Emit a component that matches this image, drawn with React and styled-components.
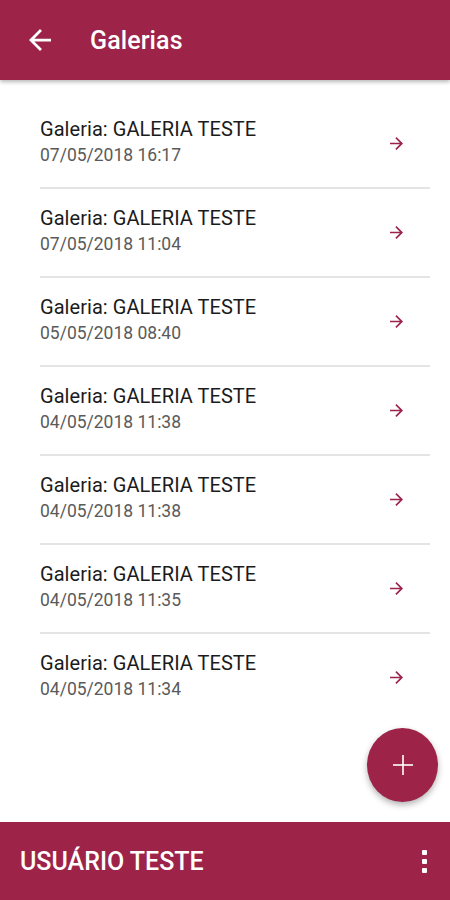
import React from 'react';
import styled, { createGlobalStyle } from 'styled-components';

const WINE = '#9d2349';

const GlobalStyle = createGlobalStyle`
  html, body {
    margin: 0;
    padding: 0;
    background: #fff;
  }
  body {
    font-family: Roboto, "Noto Sans", Arial, sans-serif;
  }
`;

const galleries = [
  { name: 'GALERIA TESTE', date: '07/05/2018 16:17' },
  { name: 'GALERIA TESTE', date: '07/05/2018 11:04' },
  { name: 'GALERIA TESTE', date: '05/05/2018 08:40' },
  { name: 'GALERIA TESTE', date: '04/05/2018 11:38' },
  { name: 'GALERIA TESTE', date: '04/05/2018 11:38' },
  { name: 'GALERIA TESTE', date: '04/05/2018 11:35' },
  { name: 'GALERIA TESTE', date: '04/05/2018 11:34' },
];

const Screen = styled.div`
  position: relative;
  display: flex;
  flex-direction: column;
  width: 450px;
  height: 900px;
  overflow: hidden;
`;

const AppBar = styled.header`
  display: flex;
  align-items: center;
  height: 80px;
  padding: 0 0 0 29px;
  gap: 39px;
  background: ${WINE};
  color: #fff;
  box-shadow: 0 2px 4px rgba(0, 0, 0, 0.28);
  z-index: 2;
`;

const AppTitle = styled.h1`
  margin: 0;
  font-size: 25px;
  font-weight: 500;
  letter-spacing: 0.1px;
`;

const List = styled.ul`
  flex: 1;
  list-style: none;
  margin: 0;
  padding: 20px 20px 0 40px;
`;

const Row = styled.li`
  display: flex;
  align-items: center;
  justify-content: space-between;
  height: 87px;
  padding-right: 27px;
  border-bottom: ${p => (p.last ? 'none' : '2px solid #e4e4e4')};
`;

const Texts = styled.div`
  display: flex;
  flex-direction: column;
  gap: 3px;
  margin-bottom: 5px;
`;

const Title = styled.span`
  font-size: 20px;
  line-height: 24px;
  color: #1b1b1b;
  letter-spacing: 0.05px;
`;

const Date = styled.span`
  font-size: 17.5px;
  line-height: 22px;
  color: #5a5a5a;
`;

const Fab = styled.button`
  position: absolute;
  right: 12px;
  bottom: 98px;
  width: 71px;
  height: 74px;
  border-radius: 50%;
  border: none;
  background: ${WINE};
  display: flex;
  align-items: center;
  justify-content: center;
  box-shadow: 0 3px 6px rgba(0, 0, 0, 0.3);
  padding: 0;
`;

const BottomBar = styled.footer`
  display: flex;
  align-items: center;
  justify-content: space-between;
  height: 78px;
  padding: 0 23px 0 20px;
  background: ${WINE};
  color: #fff;
`;

const UserName = styled.span`
  font-size: 25px;
  font-weight: 500;
  letter-spacing: 0;
`;

const Kebab = styled.div`
  display: flex;
  flex-direction: column;
  gap: 4px;
  span {
    width: 5px;
    height: 5px;
    border-radius: 1px;
    background: #fff;
  }
`;

const BackIcon = () => (
  <svg width="22" height="22" viewBox="4 4 16 16" fill="#fff">
    <path d="M20 11H7.83l5.59-5.59L12 4l-8 8 8 8 1.41-1.41L7.83 13H20v-2z" />
  </svg>
);

const ForwardIcon = () => (
  <svg width="13" height="13" viewBox="4 4 16 16" fill={WINE}>
    <path d="M12 4l-1.41 1.41L16.17 11H4v2h12.17l-5.58 5.59L12 20l8-8z" />
  </svg>
);

const PlusIcon = () => (
  <svg width="20" height="20" viewBox="0 0 20 20" stroke="#fff" strokeWidth="1.6">
    <line x1="10" y1="0" x2="10" y2="20" />
    <line x1="0" y1="10" x2="20" y2="10" />
  </svg>
);

export default function App() {
  return (
    <Screen>
      <GlobalStyle />
      <AppBar>
        <BackIcon />
        <AppTitle>Galerias</AppTitle>
      </AppBar>
      <List>
        {galleries.map((g, i) => (
          <Row key={i} last={i === galleries.length - 1}>
            <Texts>
              <Title>Galeria: {g.name}</Title>
              <Date>{g.date}</Date>
            </Texts>
            <ForwardIcon />
          </Row>
        ))}
      </List>
      <Fab>
        <PlusIcon />
      </Fab>
      <BottomBar>
        <UserName>USUÁRIO TESTE</UserName>
        <Kebab>
          <span />
          <span />
          <span />
        </Kebab>
      </BottomBar>
    </Screen>
  );
}
